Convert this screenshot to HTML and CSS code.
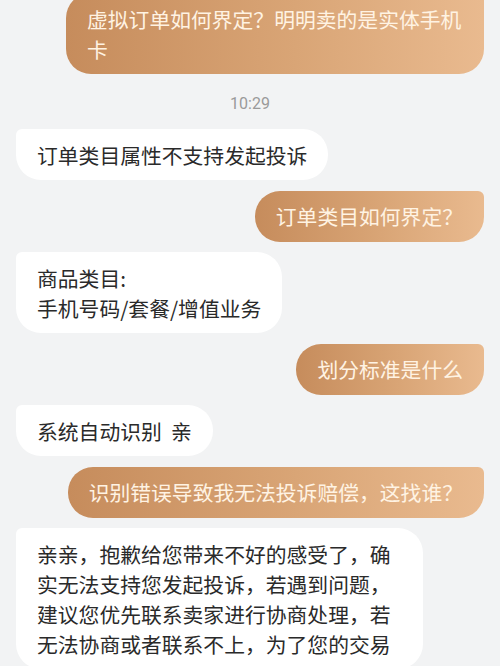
FILE: index.html
```html
<!DOCTYPE html>
<html lang="zh-CN">
<head>
<meta charset="utf-8">
<title>聊天</title>
<link rel="stylesheet" href="styles.css">
</head>
<body>
<div class="chat">
  <div class="row row-right first">
    <div class="bubble bubble-right">虚拟订单如何界定？明明卖的是实体手机卡</div>
  </div>
  <div class="time">10:29</div>
  <div class="row row-left">
    <div class="bubble bubble-left">订单类目属性不支持发起投诉</div>
  </div>
  <div class="row row-right">
    <div class="bubble bubble-right">订单类目如何界定？</div>
  </div>
  <div class="row row-left">
    <div class="bubble bubble-left">商品类目:<br>手机号码/套餐/增值业务</div>
  </div>
  <div class="row row-right">
    <div class="bubble bubble-right">划分标准是什么</div>
  </div>
  <div class="row row-left">
    <div class="bubble bubble-left">系统自动识别&nbsp;&nbsp;亲</div>
  </div>
  <div class="row row-right">
    <div class="bubble bubble-right">识别错误导致我无法投诉赔偿，这找谁？</div>
  </div>
  <div class="row row-left">
    <div class="bubble bubble-left long">亲亲，抱歉给您带来不好的感受了，确实无法支持您发起投诉，若遇到问题，建议您优先联系卖家进行协商处理，若无法协商或者联系不上，为了您的交易</div>
  </div>
</div>
</body>
</html>
```
FILE: styles.css
```css
html, body {
  margin: 0;
  padding: 0;
}
body {
  background: #f2f3f4;
  width: 500px;
  height: 666px;
  overflow: hidden;
  font-family: "Noto Sans CJK SC", "Noto Sans", sans-serif;
}
.chat {
  display: flex;
  flex-direction: column;
  gap: 10.5px;
  padding: 0 16px;
}
.row {
  display: flex;
}
.row-right {
  justify-content: flex-end;
}
.row-left {
  justify-content: flex-start;
}
.first {
  margin-top: -7px;
}
.bubble {
  font-size: 20.8px;
  line-height: 30px;
  padding: 10.5px 21px;
  box-sizing: border-box;
}
.bubble-right {
  max-width: 418px;
  color: #fff3e3;
  background: linear-gradient(to right, #c68c5c 0%, #d9a576 55%, #e9ba8f 100%);
  border-radius: 25px 6px 25px 25px;
}
.bubble-left {
  max-width: 407px;
  color: #2a2a2a;
  background: #ffffff;
  border-radius: 6px 25px 25px 25px;
}
.time {
  text-align: center;
  font-family: "Roboto", "Noto Sans", sans-serif;
  font-size: 16px;
  line-height: 31px;
  padding-top: 3px;
  color: #9a9a9a;
}
```
